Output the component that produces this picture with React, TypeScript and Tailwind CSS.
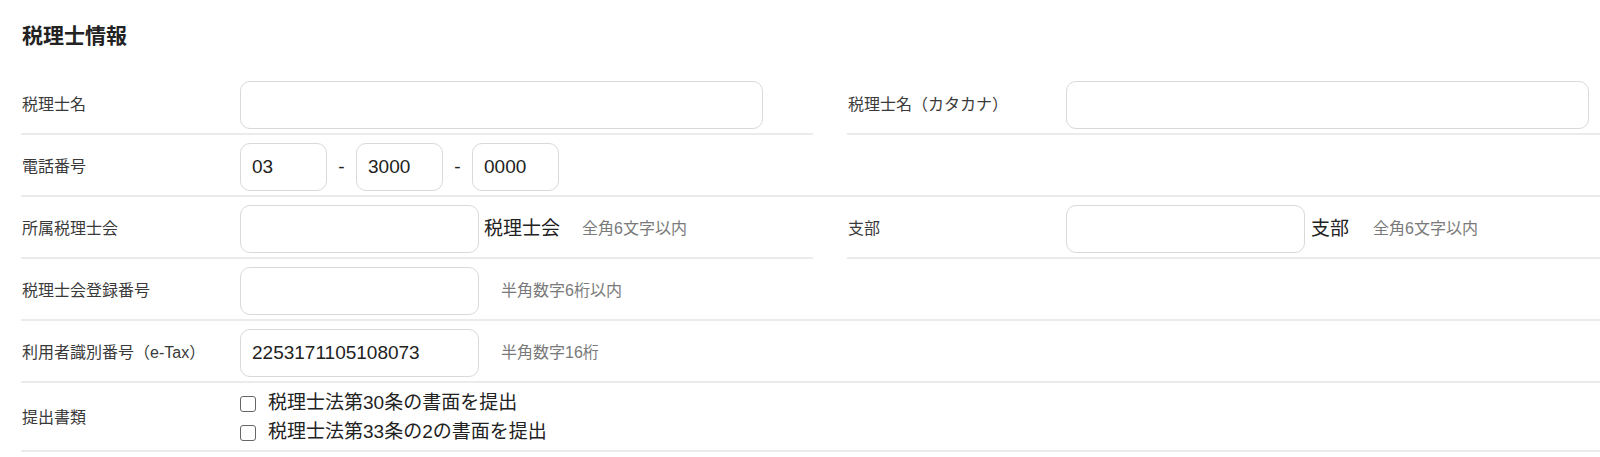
import React from 'react';

const inputCls =
    'h-[48px] rounded-[10px] border border-[#d9d9d9] bg-white px-[11px] text-[19px] text-[#222] outline-none';

const Label: React.FC<{ children: React.ReactNode }> = ({ children }) => (
    <div className="w-[219px] shrink-0 pl-[1px] text-[16px] text-[#3a3a3a]">{children}</div>
);

const Hint: React.FC<{ children: React.ReactNode; className?: string }> = ({ children, className }) => (
    <span className={`text-[16px] text-[#7a7a7a] ${className ?? ''}`}>{children}</span>
);

const App: React.FC = () => {
    return (
        <div className="w-full min-h-[457px] overflow-hidden bg-white font-['Liberation_Sans','Noto_Sans_CJK_JP',sans-serif]">
            <div className="w-[1640px] pl-[21px] pt-[22px]">
                <h2 className="pl-[1px] text-[21px] font-bold leading-[28px] text-[#222] mb-[23px]">
                    税理士情報
                </h2>

                {/* 税理士名 / カタカナ */}
                <div className="flex gap-[34px]">
                    <div className="flex h-[62px] w-[792px] items-center border-b-2 border-[#ebebeb] pt-[4px]">
                        <Label>税理士名</Label>
                        <input className={`${inputCls} w-[523px]`} readOnly />
                    </div>
                    <div className="flex h-[62px] w-[792px] items-center border-b-2 border-[#ebebeb] pt-[4px]">
                        <Label>税理士名（カタカナ）</Label>
                        <input className={`${inputCls} w-[523px]`} readOnly />
                    </div>
                </div>

                {/* 電話番号 */}
                <div className="flex h-[62px] items-center border-b-2 border-[#ebebeb] pt-[4px]">
                    <Label>電話番号</Label>
                    <input className={`${inputCls} w-[87px]`} defaultValue="03" readOnly />
                    <span className="w-[29px] text-center text-[19px] text-[#222]">-</span>
                    <input className={`${inputCls} w-[87px]`} defaultValue="3000" readOnly />
                    <span className="w-[29px] text-center text-[19px] text-[#222]">-</span>
                    <input className={`${inputCls} w-[87px]`} defaultValue="0000" readOnly />
                </div>

                {/* 所属税理士会 / 支部 */}
                <div className="flex gap-[34px]">
                    <div className="flex h-[62px] w-[792px] items-center border-b-2 border-[#ebebeb] pt-[4px]">
                        <Label>所属税理士会</Label>
                        <input className={`${inputCls} w-[239px]`} readOnly />
                        <span className="ml-[5px] text-[19px] text-[#222]">税理士会</span>
                        <Hint className="ml-[22px]">全角6文字以内</Hint>
                    </div>
                    <div className="flex h-[62px] w-[792px] items-center border-b-2 border-[#ebebeb] pt-[4px]">
                        <Label>支部</Label>
                        <input className={`${inputCls} w-[239px]`} readOnly />
                        <span className="ml-[6px] text-[19px] text-[#222]">支部</span>
                        <Hint className="ml-[24px]">全角6文字以内</Hint>
                    </div>
                </div>

                {/* 税理士会登録番号 */}
                <div className="flex h-[62px] items-center border-b-2 border-[#ebebeb] pt-[4px]">
                    <Label>税理士会登録番号</Label>
                    <input className={`${inputCls} w-[239px]`} readOnly />
                    <Hint className="ml-[22px]">半角数字6桁以内</Hint>
                </div>

                {/* 利用者識別番号 */}
                <div className="flex h-[62px] items-center border-b-2 border-[#ebebeb] pt-[4px]">
                    <Label>利用者識別番号（e-Tax）</Label>
                    <input className={`${inputCls} w-[239px]`} defaultValue="2253171105108073" readOnly />
                    <Hint className="ml-[22px]">半角数字16桁</Hint>
                </div>

                {/* 提出書類 */}
                <div className="flex h-[69px] items-center border-b-2 border-[#ebebeb] pt-[3px]">
                    <Label>提出書類</Label>
                    <div className="flex flex-col">
                        {['税理士法第30条の書面を提出', '税理士法第33条の2の書面を提出'].map((text) => (
                            <label key={text} className="flex h-[29px] items-center">
                                <input
                                    type="checkbox"
                                    className="h-[16px] w-[16px] appearance-none rounded-[3px] border border-[#666] bg-white"
                                />
                                <span className="ml-[12px] text-[19px] text-[#222]">{text}</span>
                            </label>
                        ))}
                    </div>
                </div>
            </div>
        </div>
    );
};

export default App;
